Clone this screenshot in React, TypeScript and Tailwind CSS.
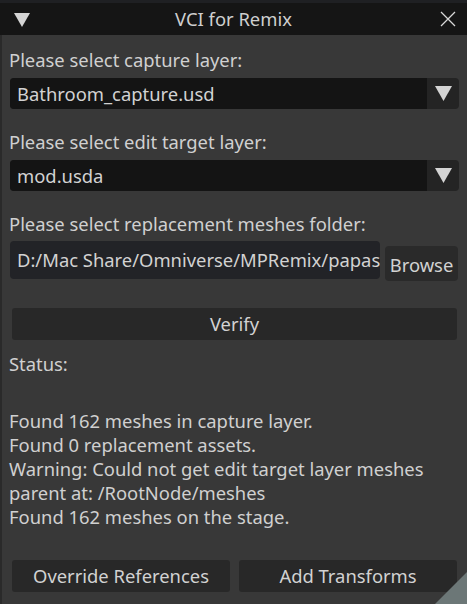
function Triangle({ className }: { className?: string }) {
    return (
        <svg viewBox="0 0 16 14" className={className}>
            <polygon points="0,0 16,0 8,14" fill="#d4d4d4" />
        </svg>
    );
}

function Combo({ value }: { value: string }) {
    return (
        <div className="mx-2 flex h-[31px] rounded-[4px] bg-[#242424] overflow-hidden">
            <div className="flex-1 flex items-center bg-[#141414] pl-[7px] text-[18.4px] text-[#d2d2d2]">{value}</div>
            <div className="w-[32px] flex items-center justify-center">
                <Triangle className="w-[17px] h-[15px]" />
            </div>
        </div>
    );
}

export default function App() {
    return (
        <div
            className="w-[467px] h-[604px] bg-[#1f2023] flex flex-col text-[#d0d0d0]"
            style={{ fontFamily: '"Noto Sans", "Open Sans", sans-serif' }}
        >
            {/* Title bar */}
            <div className="mt-[3px] h-[32px] bg-[#151515] flex items-center relative">
                <Triangle className="absolute left-[14px] top-[10px] w-[16px] h-[14px]" />
                <div className="flex-1 text-center text-[18.4px] text-[#cfcfcf]">VCI for Remix</div>
                <svg viewBox="0 0 16 16" className="absolute right-[11px] top-[8px] w-[16px] h-[16px]">
                    <path d="M1 1 L15 15 M15 1 L1 15" stroke="#d8d8d8" strokeWidth="1.3" />
                </svg>
            </div>

            {/* Body */}
            <div className="flex-1 bg-[#383838] border-l-2 border-[#2a2a2a] flex flex-col relative text-[18.4px]">
                <div className="pl-[7px] pt-[13px] pb-[6px] leading-[24px]">Please select capture layer:</div>
                <Combo value="Bathroom_capture.usd" />

                <div className="pl-[7px] pt-[21px] pb-[6px] leading-[24px]">Please select edit target layer:</div>
                <Combo value="mod.usda" />

                <div className="pl-[7px] pt-[21px] pb-[5px] leading-[24px]">Please select replacement meshes folder:</div>
                <div className="mx-2 flex gap-[5px]">
                    <div className="w-[370px] h-[38px] rounded-[4px] bg-[#222327] flex items-center pl-[7px] overflow-hidden whitespace-nowrap text-[18.4px] text-[#d2d2d2]">
                        D:/Mac Share/Omniverse/MPRemix/papas
                    </div>
                    <div className="mt-[5px] w-[73px] h-[35px] rounded-[4px] bg-[#2a2a2a] flex items-end justify-center pb-[2px] text-[18.4px] text-[#d2d2d2]">
                        Browse
                    </div>
                </div>

                <div className="mx-[10px] mt-[27px] h-[32px] rounded-[3px] bg-[#282828] flex items-center justify-center text-[18.4px] text-[#d2d2d2]">
                    Verify
                </div>

                <div className="pl-[7px] pt-[12px] leading-[24px]">
                    <div>Status:</div>
                    <div className="h-[33px]" />
                    <div>Found 162 meshes in capture layer.</div>
                    <div>Found 0 replacement assets.</div>
                    <div>Warning: Could not get edit target layer meshes</div>
                    <div>parent at: /RootNode/meshes</div>
                    <div>Found 162 meshes on the stage.</div>
                </div>

                <div className="mt-auto mb-[12px] mx-[10px] flex gap-[9px]">
                    <div className="flex-1 h-[32px] rounded-[3px] bg-[#282828] flex items-center justify-center text-[18.4px] text-[#d2d2d2]">
                        Override References
                    </div>
                    <div className="flex-1 h-[32px] rounded-[3px] bg-[#282828] flex items-center justify-center text-[18.4px] text-[#d2d2d2]">
                        Add Transforms
                    </div>
                </div>

                {/* Resize grip */}
                <svg viewBox="0 0 32 32" className="absolute right-0 bottom-0 w-[32px] h-[32px]">
                    <polygon points="32,0 32,32 0,32" fill="#6c7777" />
                </svg>
            </div>
        </div>
    );
}
